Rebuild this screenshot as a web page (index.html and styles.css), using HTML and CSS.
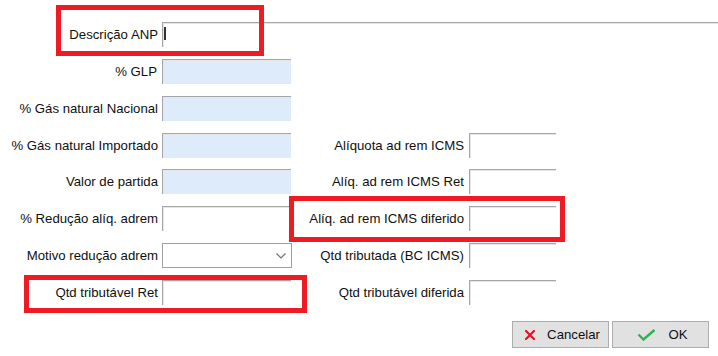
FILE: index.html
```html
<!DOCTYPE html>
<html lang="pt-BR">
<head>
<meta charset="utf-8">
<title>Dados ANP</title>
<link rel="stylesheet" href="styles.css">
</head>
<body>
<div class="dialog">
  <div class="form">
    <div class="lbl">Descrição ANP</div>
    <div class="field wide"><span class="caret"></span></div>

    <div class="lbl">% GLP</div>
    <div class="field blue"></div>
    <div class="spacer"></div>

    <div class="lbl">% Gás natural Nacional</div>
    <div class="field blue"></div>
    <div class="spacer"></div>

    <div class="lbl">% Gás natural Importado</div>
    <div class="field blue"></div>
    <div class="lbl">Alíquota ad rem ICMS</div>
    <div class="field small"></div>
    <div class="spacer"></div>

    <div class="lbl">Valor de partida</div>
    <div class="field blue"></div>
    <div class="lbl">Alíq. ad rem ICMS Ret</div>
    <div class="field small"></div>
    <div class="spacer"></div>

    <div class="lbl">% Redução alíq. adrem</div>
    <div class="field"></div>
    <div class="lbl">Alíq. ad rem ICMS diferido</div>
    <div class="field small"></div>
    <div class="spacer"></div>

    <div class="lbl">Motivo redução adrem</div>
    <div class="select">
      <svg class="chev" width="10" height="6" viewBox="0 0 10 6"><path d="M0.5 0.5 L5 5 L9.5 0.5" fill="none" stroke="#6d6d6d" stroke-width="1.2"/></svg>
    </div>
    <div class="lbl">Qtd tributada (BC ICMS)</div>
    <div class="field small"></div>
    <div class="spacer"></div>

    <div class="lbl">Qtd tributável Ret</div>
    <div class="field"></div>
    <div class="lbl">Qtd tributável diferida</div>
    <div class="field small"></div>
    <div class="spacer"></div>
  </div>

  <div class="buttons">
    <button class="btn">
      <svg width="10" height="10" viewBox="0 0 10 10"><path d="M1 1 L9 9 M9 1 L1 9" stroke="#e81123" stroke-width="2.2" stroke-linecap="square"/></svg>
      <span>Cancelar</span>
    </button>
    <button class="btn">
      <svg width="19" height="12" viewBox="0 0 19 12"><path d="M1.5 5.5 L6.5 10.5 L17.5 1" fill="none" stroke="#2fb34f" stroke-width="2.4"/></svg>
      <span>OK</span>
    </button>
  </div>

  <div class="mark m1"></div>
  <div class="mark m2"></div>
  <div class="mark m3"></div>
</div>
</body>
</html>
```

FILE: styles.css
```css
html, body {
  margin: 0;
  padding: 0;
  background: #ffffff;
}
body {
  font-family: "Liberation Sans", Arial, sans-serif;
  font-size: 13.2px;
  color: #0f0f0f;
}
.dialog {
  position: relative;
  width: 718px;
  height: 356px;
  overflow: hidden;
}
.form {
  display: grid;
  grid-template-columns: 162px 130px 177px 87px 1fr;
  grid-auto-rows: 25px;
  row-gap: 11.86px;
  padding-top: 22px;
}
.lbl {
  display: flex;
  align-items: center;
  justify-content: flex-end;
  padding-right: 4px;
  white-space: nowrap;
}
.lbl + .field + .lbl,
.lbl + .select + .lbl {
  padding-right: 5px;
}
.field {
  width: 129px;
  height: 25px;
  box-sizing: border-box;
  background: #ffffff;
  border-top: 1px solid #a6a6a6;
  border-left: 1px solid #a6a6a6;
  box-shadow: inset 1px 1px 0 #e6e6e6;
}
.field.blue {
  background: #ddebfb;
}
.field.small {
  width: 87px;
}
.field.wide {
  grid-column: 2 / -1;
  width: auto;
  position: relative;
}
.caret {
  position: absolute;
  left: 1px;
  top: 4px;
  width: 2px;
  height: 13px;
  background: #333333;
}
.select {
  width: 130px;
  height: 25px;
  box-sizing: border-box;
  border: 1px solid #a0a0a0;
  background: #ffffff;
  display: flex;
  align-items: center;
  justify-content: flex-end;
  padding-right: 5px;
}
.spacer {
  grid-column: 5;
}
.buttons {
  display: flex;
  justify-content: flex-end;
  gap: 3px;
  padding-right: 9px;
  margin-top: 16px;
}
.btn {
  width: 97px;
  height: 27px;
  box-sizing: border-box;
  background: #e1e1e1;
  border: 1px solid #adadad;
  border-radius: 0;
  display: flex;
  align-items: center;
  justify-content: center;
  gap: 12px;
  padding: 0 0 0 4px;
  font-family: "Liberation Sans", Arial, sans-serif;
  font-size: 13.2px;
  color: #0f0f0f;
}
.btn svg { display: block; }
.mark {
  position: absolute;
  border: 5px solid #ed1c24;
  box-sizing: border-box;
}
.m1 { left: 56px; top: 5px; width: 208px; height: 51px; }
.m2 { left: 24px; top: 275px; width: 283px; height: 38px; }
.m3 { left: 289px; top: 196px; width: 276px; height: 46px; }
```
